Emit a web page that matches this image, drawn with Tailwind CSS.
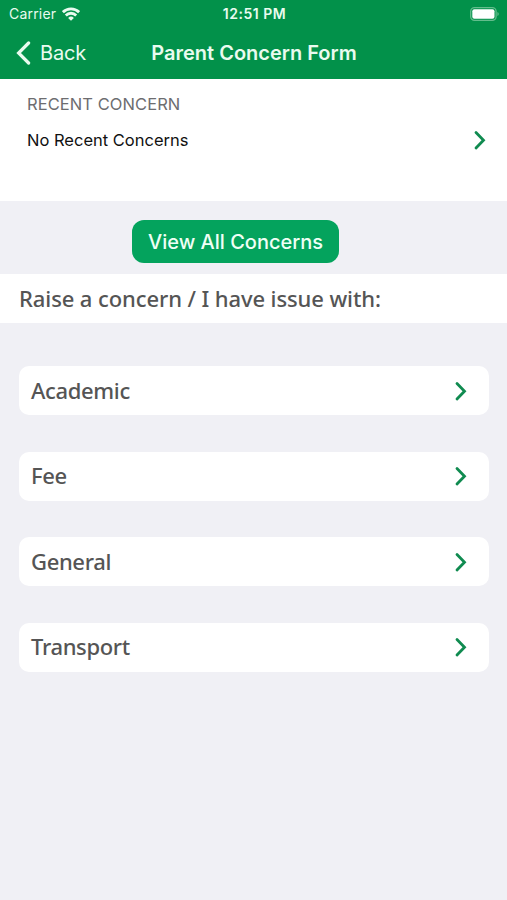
<!DOCTYPE html>
<html lang="en">
<head>
  <meta charset="UTF-8">
  <meta name="viewport" content="width=device-width, initial-scale=1.0">
  <title>Parent Concern Form</title>
  <script src="https://cdn.jsdelivr.net/npm/@tailwindcss/browser@4"></script>
</head>
<body class="bg-[#f0f0f5] font-['Inter',sans-serif] min-h-screen">
  <header class="bg-[#02914a] h-[79px] text-[#e9fbef]">
    <!-- Status bar -->
    <div class="h-[27px] grid grid-cols-3 items-center pl-[9px] pr-[7px]">
      <div class="flex items-center gap-[6px]">
        <span class="text-[14px] tracking-[0.2px]">Carrier</span>
        <svg class="w-[18px] h-[14px]" viewBox="0 0 18 14" fill="none" stroke="currentColor" stroke-width="2.8">
          <path d="M0.9 5.2a11.6 11.6 0 0 1 16.2 0"/>
          <path d="M3.8 8.4a7.4 7.4 0 0 1 10.4 0"/>
          <path d="M9 13.8L6.1 10.9a4.2 4.2 0 0 1 5.8 0z" fill="currentColor" stroke="none"/>
        </svg>
      </div>
      <span class="text-[14px] tracking-[0.5px] font-semibold text-center whitespace-nowrap">12:51 PM</span>
      <svg class="w-[30px] h-[14px] justify-self-end" viewBox="0 0 30 14">
        <rect x="0.7" y="0.7" width="25.4" height="12.6" rx="3.8" fill="none" stroke="#63bd8c" stroke-width="1.3"/>
        <rect x="2.3" y="2.3" width="22.2" height="9.4" rx="2" fill="#fff"/>
        <path d="M27.4 5v4c1.8-.6 1.8-3.4 0-4z" fill="#63bd8c"/>
      </svg>
    </div>
    <!-- Navigation bar -->
    <div class="h-[51px] grid grid-cols-[1fr_auto_1fr] items-center pl-4 pr-[15px]">
      <a class="flex items-center gap-[9px]">
        <svg class="w-[15px] h-[24px]" viewBox="0 0 15 24" fill="none" stroke="currentColor" stroke-width="3.2" stroke-linecap="round" stroke-linejoin="miter"><path d="M12.6 2L2.6 12l10 10"/></svg>
        <span class="text-[20px] tracking-[-0.2px]">Back</span>
      </a>
      <h1 class="text-[20px] font-semibold whitespace-nowrap">Parent Concern Form</h1>
    </div>
  </header>

  <section class="bg-white h-[122px] pl-[27px] pr-[21px] pt-[13px]">
    <h2 class="text-[16.5px] leading-6 tracking-[0.07px] text-[#6d6d70]">RECENT CONCERN</h2>
    <div class="flex items-center justify-between mt-3">
      <p class="text-[16.5px] leading-6 text-[#111]">No Recent Concerns</p>
      <svg class="w-3 h-5" viewBox="0 0 12 20" fill="none" stroke="#108b50" stroke-width="2.8" stroke-linecap="round"><path d="M2 2.5l7.5 7.7L2 18"/></svg>
    </div>
  </section>

  <div class="h-[73px] pt-[19px] pl-[132px]">
    <button class="w-[207px] h-[43px] rounded-[12px] bg-[#04a35d] text-[#effff5] text-[20px] font-medium whitespace-nowrap">View All Concerns</button>
  </div>

  <div class="bg-white h-[49px] flex items-center pb-px pl-[19px] font-['Noto_Sans',sans-serif] text-[#555] text-[22px] font-medium tracking-[-0.1px] whitespace-nowrap">Raise a concern / I have issue with:</div>

  <ul class="flex flex-col gap-[36.5px] mt-[43px] pl-[19px] pr-[18px] font-['Noto_Sans',sans-serif] text-[22px] font-medium tracking-[-0.35px] text-[#555]">
    <li class="h-[49px] bg-white rounded-[10px] flex items-center justify-between pl-3 pr-[22px]">
      <span class="pb-px">Academic</span>
      <svg class="w-3 h-5" viewBox="0 0 12 20" fill="none" stroke="#108b50" stroke-width="2.8" stroke-linecap="round"><path d="M2 2.5l7.5 7.7L2 18"/></svg>
    </li>
    <li class="h-[49px] bg-white rounded-[10px] flex items-center justify-between pl-3 pr-[22px]">
      <span class="pb-px">Fee</span>
      <svg class="w-3 h-5" viewBox="0 0 12 20" fill="none" stroke="#108b50" stroke-width="2.8" stroke-linecap="round"><path d="M2 2.5l7.5 7.7L2 18"/></svg>
    </li>
    <li class="h-[49px] bg-white rounded-[10px] flex items-center justify-between pl-3 pr-[22px]">
      <span class="pb-px">General</span>
      <svg class="w-3 h-5" viewBox="0 0 12 20" fill="none" stroke="#108b50" stroke-width="2.8" stroke-linecap="round"><path d="M2 2.5l7.5 7.7L2 18"/></svg>
    </li>
    <li class="h-[49px] bg-white rounded-[10px] flex items-center justify-between pl-3 pr-[22px]">
      <span class="pb-px">Transport</span>
      <svg class="w-3 h-5" viewBox="0 0 12 20" fill="none" stroke="#108b50" stroke-width="2.8" stroke-linecap="round"><path d="M2 2.5l7.5 7.7L2 18"/></svg>
    </li>
  </ul>
</body>
</html>
